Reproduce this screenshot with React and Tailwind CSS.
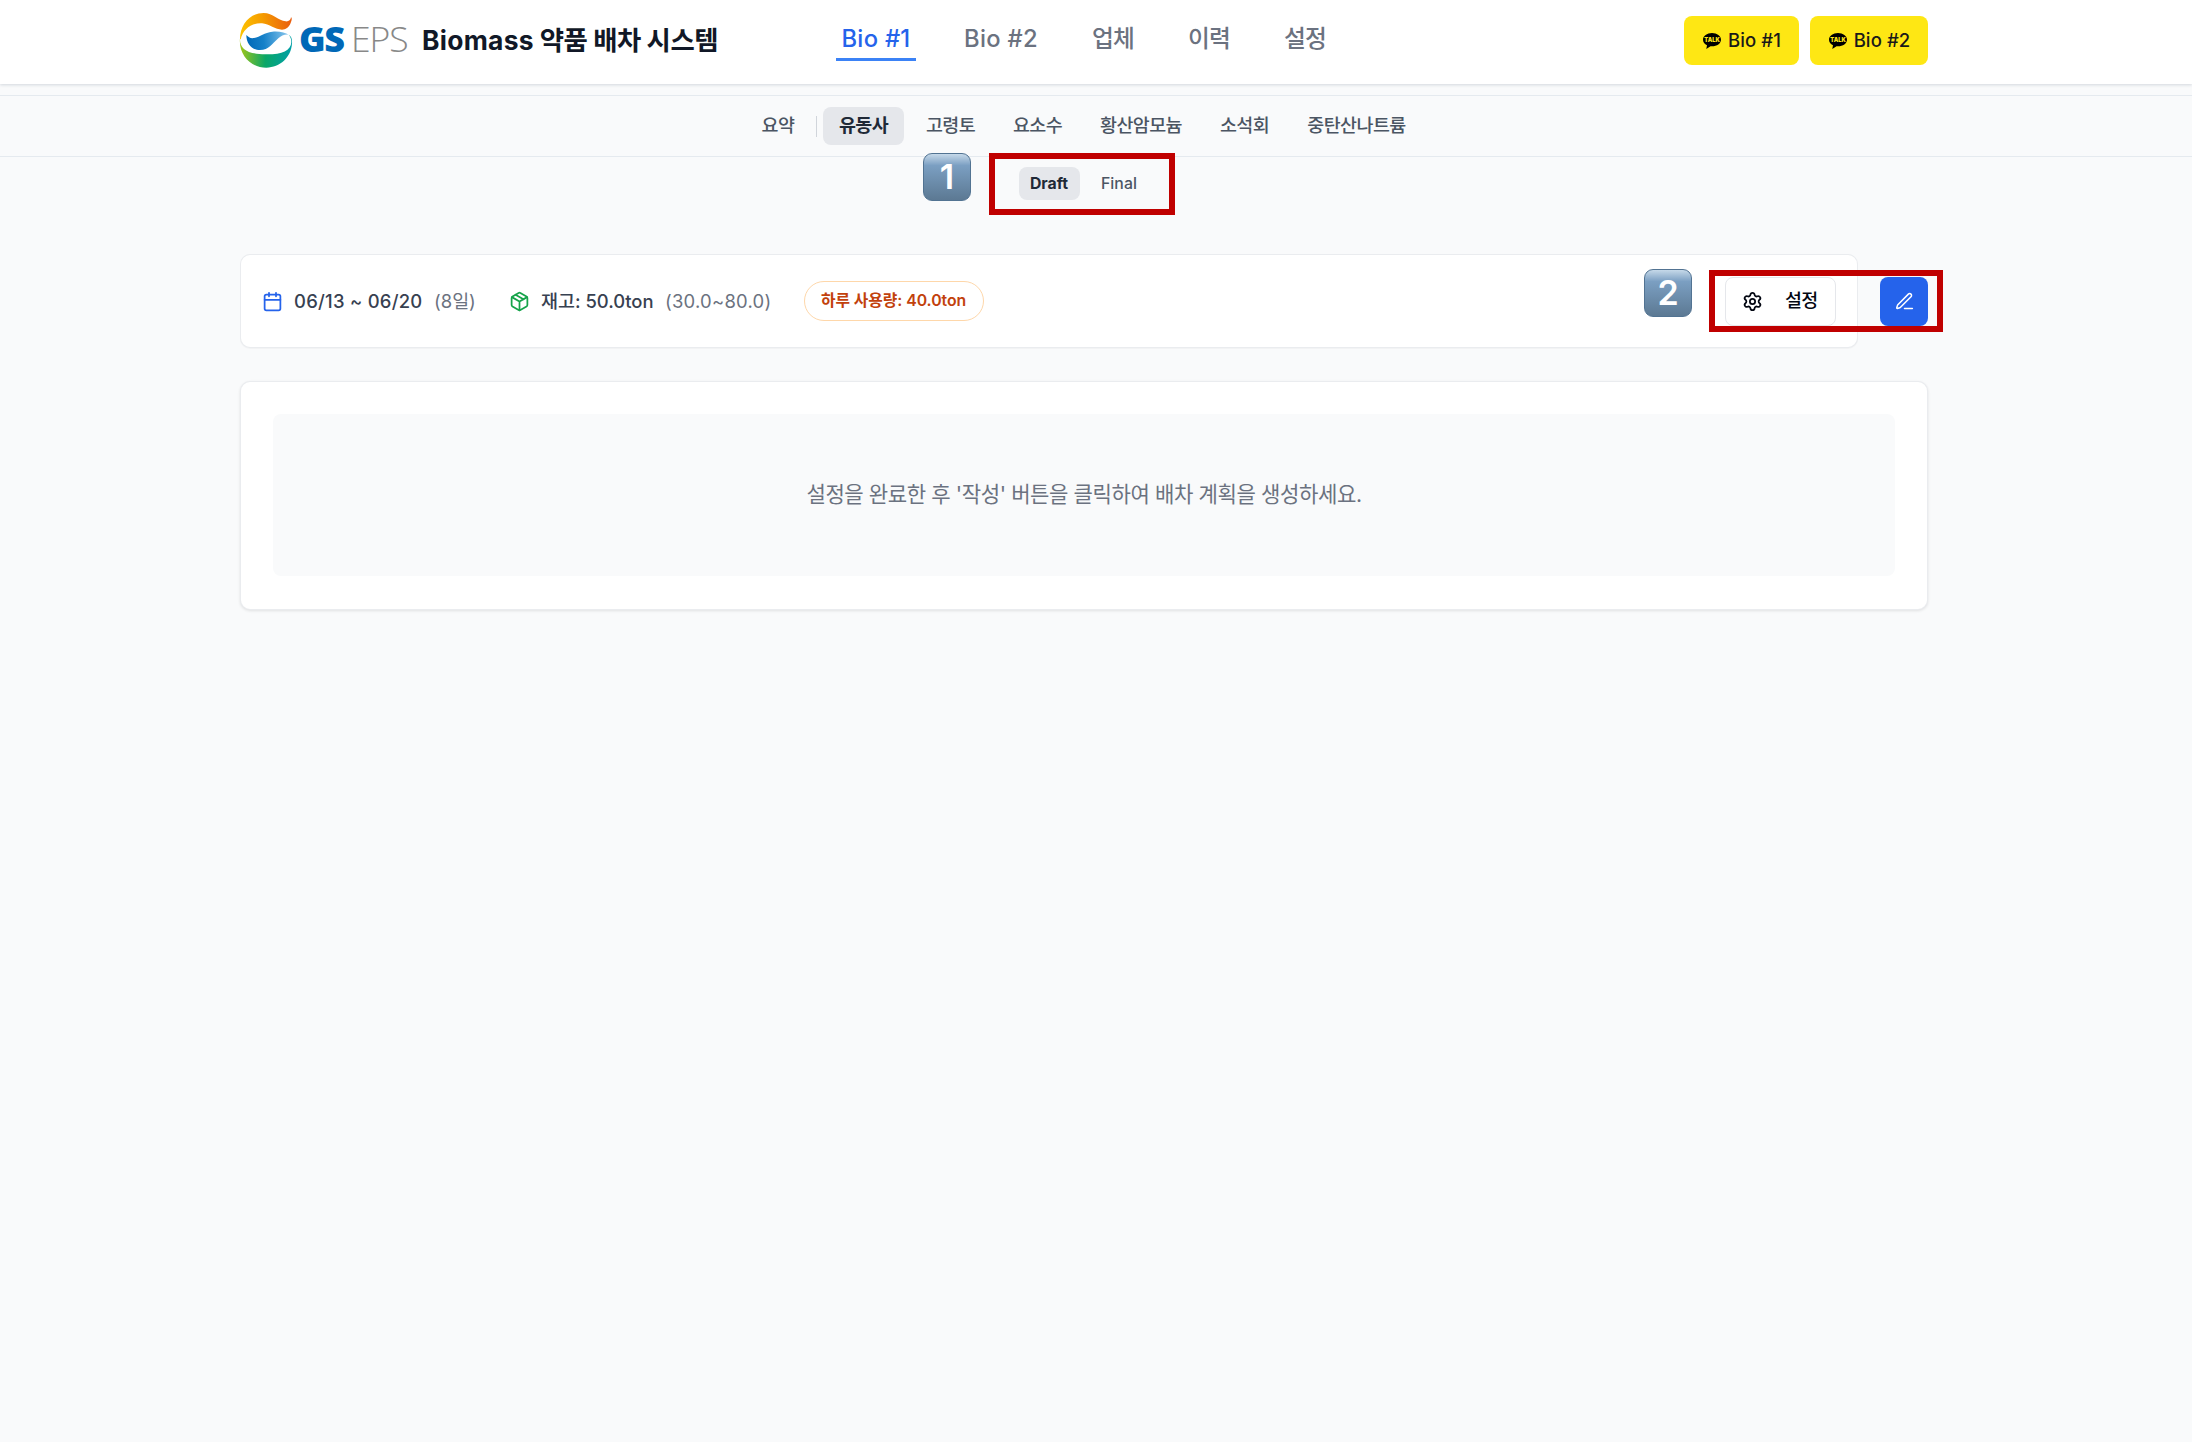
import { Settings } from "lucide-react";

const MAIN_TABS = [
  { label: "Bio #1", width: "w-[80px]", active: true },
  { label: "Bio #2", width: "w-[86px]" },
  { label: "업체", width: "w-[54px]", korean: true },
  { label: "이력", width: "w-[54px]", korean: true },
  { label: "설정", width: "w-[54px]", korean: true },
];

const CHEMICALS = [
  { label: "유동사", width: "w-[81px]", active: true },
  { label: "고령토", width: "w-[81px]" },
  { label: "요소수", width: "w-[81px]" },
  { label: "황산암모늄", width: "w-[114px]" },
  { label: "소석회", width: "w-[81px]" },
  { label: "중탄산나트륨", width: "w-[131px]" },
];

function Logo() {
  return (
    <div className="flex h-[64px] w-[168px] items-start">
      <svg className="-ml-1 h-[64px] w-[62px] shrink-0" viewBox="0 0 186 192" fill="none">
        <defs>
          <linearGradient id="flame" x1="12" y1="60" x2="167" y2="40" gradientUnits="userSpaceOnUse">
            <stop offset="0" stopColor="#fdc300" />
            <stop offset="0.45" stopColor="#f59c00" />
            <stop offset="1" stopColor="#e95d0f" />
          </linearGradient>
          <linearGradient id="wave" x1="31" y1="100" x2="160" y2="85" gradientUnits="userSpaceOnUse">
            <stop offset="0" stopColor="#0068b7" />
            <stop offset="0.4" stopColor="#1581c9" />
            <stop offset="1" stopColor="#8cc8ee" />
          </linearGradient>
          <linearGradient id="leaf" x1="12" y1="120" x2="168" y2="130" gradientUnits="userSpaceOnUse">
            <stop offset="0" stopColor="#a2c617" />
            <stop offset="0.5" stopColor="#0aa767" />
            <stop offset="1" stopColor="#009fa8" />
          </linearGradient>
        </defs>
        <path fill="url(#flame)" d="M12 94C12 49 42 15 83 15C111 15 127 38 149 40C158 41 164 36 165 28C169 29 167 38 164 45C158 59 149 65 138 65C118 65 100 48 78 46C45 44 21 64 14 94Z" />
        <path fill="url(#wave)" d="M31 81C38 87 43 92 54 90C73 87 85 73 109 71C132 69 147 74 159 80C144 79 136 83 127 91C107 109 99 126 72 126C47 126 31 107 31 81Z" />
        <path fill="url(#leaf)" d="M12 90C10 124 36 138 88 139C136 140 165 129 166 102C166 92 163 86 158 80C166 84 169 94 168 106C166 148 132 179 91 179C44 179 7 141 12 90Z" />
      </svg>
      <div className="mt-[9px] flex h-[44px] items-center whitespace-nowrap font-['Open_Sans',sans-serif] leading-none">
        <span className="ml-[1px] w-[52px] text-[36px] font-extrabold tracking-[-1.3px] text-[#0068b7]">GS</span>
        <span className="text-[35.5px] font-light tracking-[-1px] text-[#888888]">EPS</span>
      </div>
    </div>
  );
}

function TalkButton({ label, width }) {
  return (
    <button className={`${width} flex h-[49px] items-center justify-center gap-[7px] rounded-[8px] bg-[#fee714] pl-px text-[18.5px] font-medium text-[#191919]`}>
      <svg className="h-[18px] w-[18px]" viewBox="0 0 18 18">
        <path d="M9 1C4 1 0 4 0 7.7c0 2.4 1.6 4.4 4 5.6L3.3 17l4.2-2.8 1.5.1c5 0 9-2.9 9-6.6S14 1 9 1Z" fill="#000" />
        <text x="9" y="10" textAnchor="middle" fontSize="5.7" fontWeight="900" fontFamily="Inter, sans-serif" fill="#fee714">TALK</text>
      </svg>
      <span className="tracking-[0.1px]">{label}</span>
    </button>
  );
}

function Keycap({ digit }) {
  return (
    <span className="flex h-[48px] w-[48px] items-center justify-center rounded-[9px] border-[1.5px] border-[#527392] bg-linear-to-b from-[#c6d9e9] via-[#7b9fc2] via-25% to-[#5c7993] font-['Inter',sans-serif] text-[34px] font-semibold leading-none text-white">
      {digit}
    </span>
  );
}

function CalendarIcon() {
  return (
    <svg className="h-[21px] w-[21px] text-[#2563eb]" viewBox="0 0 24 24" fill="none" stroke="currentColor" strokeWidth="2" strokeLinecap="round" strokeLinejoin="round">
      <path d="M8 2v4M16 2v4M3 10h18" />
      <rect width="18" height="18" x="3" y="4" rx="2" />
    </svg>
  );
}

function PackageIcon() {
  return (
    <svg className="h-[21px] w-[21px] text-[#16a34a]" viewBox="0 0 24 24" fill="none" stroke="currentColor" strokeWidth="2" strokeLinecap="round" strokeLinejoin="round">
      <path d="m7.5 4.27 9 5.15" />
      <path d="M21 8a2 2 0 0 0-1-1.73l-7-4a2 2 0 0 0-2 0l-7 4A2 2 0 0 0 3 8v8a2 2 0 0 0 1 1.73l7 4a2 2 0 0 0 2 0l7-4A2 2 0 0 0 21 16Z" />
      <path d="m3.3 7 8.7 5 8.7-5M12 22V12" />
    </svg>
  );
}

function PenIcon() {
  return (
    <svg className="h-[21px] w-[21px]" viewBox="0 0 24 24" fill="none" stroke="currentColor" strokeWidth="1.7" strokeLinecap="round" strokeLinejoin="round">
      <path d="M12 20h9" />
      <path d="M16.4 3.6a1 1 0 0 1 3 3L7.4 18.6a2 2 0 0 1-.9.5l-2.8.8a.5.5 0 0 1-.6-.6l.8-2.8a2 2 0 0 1 .5-.9z" />
    </svg>
  );
}

export default function App() {
  return (
    <div className="relative min-h-[1442px] w-full overflow-hidden whitespace-nowrap bg-[#f9fafb] font-['Inter','Noto_Sans_CJK_KR',sans-serif] text-[#374151]">
      <header className="h-[84px] bg-white shadow-[0_1px_3px_rgba(15,40,70,0.16)]">
        <div className="ml-[240px] grid w-[1688px] grid-cols-[1fr_auto_1fr]">
          <div className="flex pt-[8px]">
            <Logo />
            <h1 className="ml-[14px] h-[65px] text-[26.4px] leading-[65px] font-bold tracking-[-0.45px] text-[#111827]">
              <span className="tracking-[0.3px]">Biomass</span> 약품 배차 시스템
            </h1>
          </div>
          <nav className="flex gap-[42px] pt-[16px]">
            {MAIN_TABS.map((tab) => (
              <a
                key={tab.label}
                className={`${tab.width} flex h-[45px] items-start justify-center border-b-[3px] pt-[5px] text-[23.74px] leading-[36px] font-medium ${
                  tab.active ? "border-[#3b82f6] text-[#2563eb]" : "border-transparent text-[#6b7280]"
                } ${tab.korean ? "tracking-[-0.8px]" : "tracking-[0.3px]"}`}
              >
                {tab.label}
              </a>
            ))}
          </nav>
          <div className="flex justify-end gap-[11px] pt-[16px]">
            <TalkButton label="Bio #1" width="w-[115px]" />
            <TalkButton label="Bio #2" width="w-[118px]" />
          </div>
        </div>
      </header>

      <nav className="mt-[11px] flex h-[62px] border-y border-[#e5eaef]">
        <div className="ml-[240px] flex w-[1688px] items-start justify-center pt-[11px] text-[18.46px] tracking-[-0.55px]">
          <a className="flex h-[38px] w-[64px] items-center justify-center font-medium text-[#4b5563]">요약</a>
          <span className="mx-[6px] mt-[9px] h-[21px] w-px bg-[#d1d5db]" />
          <div className="flex gap-[6px]">
            {CHEMICALS.map((item) => (
              <a
                key={item.label}
                className={`${item.width} flex h-[38px] items-center justify-center rounded-[8px] ${
                  item.active ? "bg-[#e5e7eb] font-bold text-[#1f2937]" : "font-medium text-[#4b5563]"
                }`}
              >
                {item.label}
              </a>
            ))}
          </div>
        </div>
      </nav>

      <div className="ml-[242px] flex h-[97px] w-[1688px] justify-center gap-[5px] pt-[10px] text-[15.8px]">
        <a className="flex h-[33px] w-[61px] items-center justify-center rounded-[8px] bg-[#e5e7eb] pt-px font-bold text-[#1f2937]">Draft</a>
        <a className="flex h-[33px] w-[69px] items-center justify-center pt-px font-medium tracking-[0.1px] text-[#4b5563]">Final</a>
      </div>

      <main className="ml-[240px] w-[1688px]">
        <div className="relative flex h-[94px] items-center">
          <section className="flex h-[94px] w-[1618px] items-center rounded-[10px] border border-[#e5e7eb]/80 bg-white pl-[21px] text-[18.46px] shadow-[0_1px_1px_rgba(0,0,0,0.03)]">
            <CalendarIcon />
            <span className="ml-[11px] w-[140px] pt-px font-medium tracking-[0.25px]">06/13 ~ 06/20</span>
            <span className="w-[75px] pt-px text-[#6b7280]">(8일)</span>
            <PackageIcon />
            <span className="ml-[11px] w-[124px] pt-px font-medium">재고: 50.0ton</span>
            <span className="w-[138.5px] pt-px tracking-[0.25px] text-[#6b7280]">(30.0~80.0)</span>
            <span className="flex h-[40px] w-[180px] items-center justify-center rounded-full border border-[#fed7aa] text-[15.8px] font-semibold tracking-[-0.05px] text-[#c2410c]">
              하루 사용량: 40.0ton
            </span>
            <button className="mr-[21px] ml-auto flex h-[49px] w-[111px] items-center rounded-[8px] border border-[#e5e7eb] bg-white pl-[16px] font-medium tracking-[-0.7px] text-[#030712]">
              <Settings className="h-[21px] w-[21px]" strokeWidth={2} />
              <span className="ml-[22px]">설정</span>
            </button>
          </section>
          <button className="ml-[22px] flex h-[49px] w-[48px] items-center justify-center rounded-[8px] bg-[#2563eb] text-white">
            <PenIcon />
          </button>
          <div className="absolute top-[15px] left-[1404px]"><Keycap digit="2" /></div>
          <div className="absolute top-[16px] left-[1469px] h-[62px] w-[234px] border-[6px] border-[#c00000]" />
        </div>

        <section className="mt-[33px] rounded-[10px] border border-[#e5e7eb]/80 bg-white p-[32px] pb-[33px] shadow-[0_1px_3px_rgba(0,0,0,0.1)]">
          <div className="flex h-[162px] items-center justify-center rounded-[8px] bg-[#f9fafb] pb-px text-[21.1px] tracking-[-0.42px] text-[#6b7280]">
            설정을 완료한 후 '작성' 버튼을 클릭하여 배차 계획을 생성하세요.
          </div>
        </section>
      </main>

      <div className="absolute top-[153px] left-[923px]"><Keycap digit="1" /></div>
      <div className="absolute top-[153px] left-[989px] h-[62px] w-[186px] border-[6px] border-[#c00000]" />
    </div>
  );
}
